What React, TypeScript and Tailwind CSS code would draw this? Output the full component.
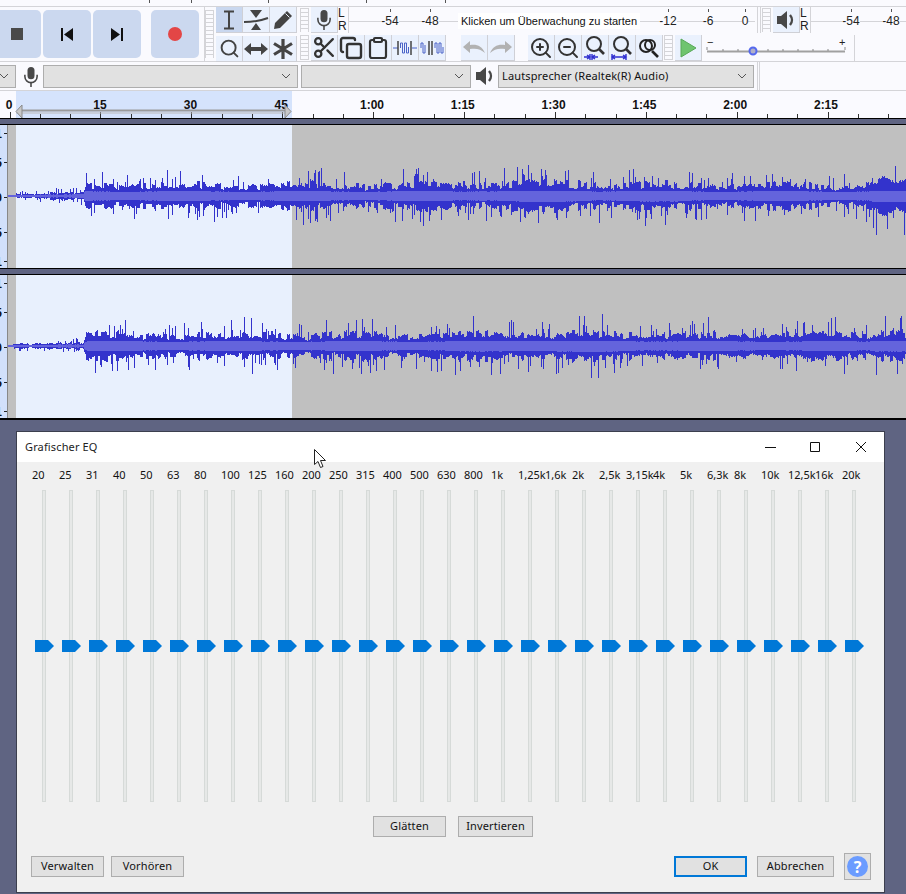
import type { ReactNode } from 'react';
import { Copy, Clipboard, Scissors, Search, ZoomIn, ZoomOut } from 'lucide-react';

const BANDS = ['20', '25', '31', '40', '50', '63', '80', '100', '125', '160', '200', '250', '315', '400', '500', '630', '800', '1k', '1,25k', '1,6k', '2k', '2,5k', '3,15k', '4k', '5k', '6,3k', '8k', '10k', '12,5k', '16k', '20k'];
const RULER = ['15', '30', '45', '1:00', '1:15', '1:30', '1:45', '2:00', '2:15'];

// amplitude envelope of the clip, [x, half height]
const ENVELOPE = [[0, 1], [6, 2], [10, 3], [24, 3], [50, 4], [75, 5], [77, 15], [280, 15], [440, 15], [520, 18], [600, 17], [700, 15], [860, 15], [868, 21], [898, 20]];

function envelopeAt(x: number) {
  for (let i = 1; i < ENVELOPE.length; i++) {
    const [x0, a0] = ENVELOPE[i - 1];
    const [x1, a1] = ENVELOPE[i];
    if (x <= x1) return a0 + ((a1 - a0) * (x - x0)) / (x1 - x0);
  }
  return 14;
}

function buildWave(seed: number, mid: number) {
  let s = seed;
  const rnd = () => {
    s = (s * 16807) % 2147483647;
    return s / 2147483647;
  };
  let outer = '';
  let inner = '';
  let level = 0.8;
  for (let x = 0; x < 898; x++) {
    // level jumps every few pixels, so the body of the wave has blocks and dips
    if (x % 3 === 0) level = 0.42 + rnd() * 0.5;
    const env = envelopeAt(x) * (0.92 + 0.12 * Math.sin(x / 19 + seed));
    const up = Math.max(1, env * (rnd() < 0.14 ? 1 + rnd() * 0.9 : level + rnd() * 0.14));
    const down = Math.max(1, env * (rnd() < 0.14 ? 1 + rnd() * 0.95 : level + rnd() * 0.14));
    const rms = Math.max(1, Math.min(5.5, env * 0.32 + (rnd() < 0.5 ? 0.5 : 0)));
    outer += `M${x + 0.5} ${(mid - up).toFixed(0)}V${(mid + down).toFixed(0)}`;
    inner += `M${x + 0.5} ${(mid - rms).toFixed(0)}V${(mid + rms).toFixed(0)}`;
  }
  return { outer, inner };
}

function Grip({ className = 'h-full' }: { className?: string }) {
  return <div className={`w-[9px] shrink-0 border-x border-[#d4d4d8] bg-[repeating-linear-gradient(180deg,#d4d4d8_0_1px,transparent_1px_4px)] ${className}`} />;
}

function ToolBtn({ children, active }: { children: ReactNode; active?: boolean }) {
  return (
    <div className={`flex h-[26px] w-[27px] shrink-0 items-center justify-center border-r border-b border-[#cfd0d6] ${active ? 'bg-[#c9d7ef]' : 'bg-[#eaf1fd]'}`}>
      {children}
    </div>
  );
}

function TransportBtn({ children, className = 'w-12' }: { children: ReactNode; className?: string }) {
  return <div className={`flex h-12 shrink-0 items-center justify-center rounded-[5px] bg-[#cbd8ef] ${className}`}>{children}</div>;
}

function MeterMark({ label, className = 'w-10' }: { label: string; className?: string }) {
  return (
    <div className={`flex h-full shrink-0 flex-col items-center ${className}`}>
      <div className="mt-[2px] h-[3px] w-px bg-[#555]" />
      <span className="mt-[2px] bg-[#fafafe] text-[12px] leading-[14px] text-[#222]">{label}</span>
    </div>
  );
}

function ChannelLabels() {
  return (
    <div className="flex h-full w-[11px] shrink-0 flex-col border-r border-[#d4d4d8] text-[12px] leading-[13px] text-[#222]">
      <span>L</span>
      <span>R</span>
    </div>
  );
}

function Speaker({ size = 22 }: { size?: number }) {
  return (
    <svg width={size} height={size} viewBox="0 0 22 22">
      <path d="M2 7h4l6-5v18l-6-5H2z" fill="#484848" />
      <path d="M15 6c2.600 3 2.600 7 0 10" fill="none" stroke="#484848" strokeWidth="2.400" />
    </svg>
  );
}

function Mic() {
  return (
    <svg width="16" height="21" viewBox="0 0 18 24">
      <rect x="5" y="1" width="8" height="14" rx="4" fill="#484848" />
      <path d="M2 10v2a7 7 0 0 0 14 0v-2" fill="none" stroke="#484848" strokeWidth="1.800" />
      <path d="M9 19v5" stroke="#484848" strokeWidth="1.800" />
    </svg>
  );
}

function Chevron() {
  return (
    <svg width="10" height="6" viewBox="0 0 10 6" className="shrink-0">
      <path d="M1 1l4 4 4-4" fill="none" stroke="#555" strokeWidth="1" />
    </svg>
  );
}

function Dropdown({ className, label }: { className: string; label?: string }) {
  return (
    <div className={`flex h-[23px] shrink-0 items-center justify-between border border-[#adadad] bg-[#e1e1e1] pr-[6px] pl-[3px] text-[11px] tracking-[0.14px] text-[#111] ${className}`}>
      <span>{label}</span>
      <Chevron />
    </div>
  );
}

function FitIcon({ wide }: { wide?: boolean }) {
  return (
    <svg width="26" height="26" viewBox="0 0 26 26">
      <circle cx="12" cy="9" r="7" fill="none" stroke="#333" strokeWidth="2" />
      <path d="M17 14l5 5" stroke="#333" strokeWidth="2.600" />
      {wide ? (
        <path d="M3 22h14M3 19v6M17 19v6M6 20l-3 2 3 2M14 20l3 2-3 2" fill="none" stroke="#2f2fd0" strokeWidth="1.400" />
      ) : (
        <path d="M2 22h6M10 22h6M8 19l0 6M10 19l0 6M5 20l3 2-3 2M13 20l-3 2 3 2" fill="none" stroke="#2f2fd0" strokeWidth="1.400" />
      )}
    </svg>
  );
}

function TransportRow() {
  return (
    <div className="flex h-[54px] items-center bg-[#fafafe]">
      <div className="flex -ml-[7px] gap-[2px]">
        <TransportBtn>
          <div className="ml-[-1px] h-3 w-3 bg-[#4a4a4a]" />
        </TransportBtn>
        <TransportBtn>
          <svg width="14" height="13" viewBox="0 0 14 13"><path d="M1 0h2v13H1zM13 0v13L4 6.500z" fill="#111" /></svg>
        </TransportBtn>
        <TransportBtn>
          <svg width="14" height="13" viewBox="0 0 14 13"><path d="M11 0h2v13h-2zM1 0v13l9-6.500z" fill="#111" /></svg>
        </TransportBtn>
        <TransportBtn className="ml-2 w-12">
          <div className="h-[14px] w-[14px] rounded-full bg-[#e34646]" />
        </TransportBtn>
      </div>
      <div className="ml-[5px] h-full w-px bg-[#d4d4d8]" />
      <Grip className="h-[48px]" />
      <div className="ml-[2px] flex h-full w-[84px] shrink-0 flex-col">
        <div className="flex h-[26px]">
          <ToolBtn active>
            <svg width="14" height="20" viewBox="0 0 14 20"><path d="M2 1.500h10M2 18.500h10M7 1.500v17" fill="none" stroke="#444" strokeWidth="2" /></svg>
          </ToolBtn>
          <ToolBtn>
            <svg width="26" height="22" viewBox="0 0 26 22"><path d="M7 1h12l-6 8zM8 21h10l-5-7z" fill="#444" /><path d="M1 13c8 0 16-1 24-4" fill="none" stroke="#444" strokeWidth="2" /></svg>
          </ToolBtn>
          <ToolBtn>
            <svg width="22" height="22" viewBox="0 0 22 22"><path d="M2 20l1-6L15 2l5 5L8 19z" fill="#444" /><path d="M13.500 4.500l4 4" stroke="#eaf1fd" strokeWidth="1" /></svg>
          </ToolBtn>
        </div>
        <div className="mt-[3px] flex h-[26px]">
          <ToolBtn>
            <Search size={21} strokeWidth={2.200} color="#444" />
          </ToolBtn>
          <ToolBtn>
            <svg width="24" height="14" viewBox="0 0 24 14"><path d="M0 7l7-6v4h10V1l7 6-7 6V9H7v4z" fill="#444" /></svg>
          </ToolBtn>
          <ToolBtn>
            <svg width="22" height="22" viewBox="0 0 22 22"><path d="M11 1v20M2 5.500l18 11M20 5.500l-18 11" stroke="#444" strokeWidth="3.200" /></svg>
          </ToolBtn>
        </div>
      </div>
      <div className="flex h-full min-w-0 flex-1 flex-col">
        <div className="flex h-[26px] items-stretch">
          <Grip className="mt-[1px] h-[24px]" />
          <div className="ml-[2px]"><ToolBtn><Mic /></ToolBtn></div>
          <ChannelLabels />
          <div className="flex w-[406px] shrink-0 items-start bg-[linear-gradient(#d4d4d8,#d4d4d8)] bg-[length:100%_1px] bg-[position:0_14px] bg-no-repeat pl-[21px]">
            <MeterMark label="-54" />
            <MeterMark label="-48" />
            <div className="mt-[6px] ml-2 flex h-[16px] w-[182px] shrink-0 items-center justify-center bg-white text-[11px] whitespace-nowrap text-[#111]">Klicken um Überwachung zu starten</div>
            <div className="ml-2" />
            <MeterMark label="-12" />
            <MeterMark label="-6" />
            <MeterMark label="0" className="ml-[7px] w-5" />
          </div>
          <div className="ml-[2px] h-full w-[4px] shrink-0 border-x border-[#d4d4d8]" />
          <div className="ml-[1px]"><Grip className="mt-[1px] h-[24px]" /></div>
          <div className="ml-[2px]">
            <ToolBtn><Speaker /></ToolBtn>
          </div>
          <ChannelLabels />
          <div className="flex min-w-0 flex-1 items-start bg-[linear-gradient(#d4d4d8,#d4d4d8)] bg-[length:100%_1px] bg-[position:0_14px] bg-no-repeat pl-[20px]">
            <MeterMark label="-54" />
            <MeterMark label="-48" />
          </div>
        </div>
        <div className="mt-px h-px bg-[#d4d4d8]" />
        <div className="mt-[1px] flex h-[26px]">
          <Grip className="h-[25px]" />
          <div className="ml-[2px] flex">
            <ToolBtn><Scissors size={25} strokeWidth={2.200} color="#333" /></ToolBtn>
            <ToolBtn><Copy size={24} strokeWidth={2.400} color="#333" /></ToolBtn>
            <ToolBtn><Clipboard size={24} strokeWidth={2.200} color="#333" /></ToolBtn>
            <ToolBtn>
              <svg width="24" height="14" viewBox="0 0 24 14"><path d="M0 7h5M19 7h5" stroke="#4a63c8" /><path d="M5 0v14M18 0v14" stroke="#444" strokeWidth="1.500" /><path d="M7.500 7V2h2v10h2V2h2v10h2V6" fill="none" stroke="#4a63c8" /></svg>
            </ToolBtn>
            <ToolBtn>
              <svg width="24" height="14" viewBox="0 0 24 14"><path d="M1 7V2h2v10h2V4" fill="none" stroke="#4a63c8" /><path d="M9 0v14M12 0v14" stroke="#444" strokeWidth="1.500" /><path d="M15 7V2h2v10h2V2h2v10h2V6" fill="none" stroke="#4a63c8" /></svg>
            </ToolBtn>
          </div>
          <div className="ml-[15px] flex">
            <ToolBtn>
              <svg width="24" height="16" viewBox="0 0 24 16"><path d="M1 7l7-6v4c7-1 12 1 15 8-4-4-9-5-15-4v4z" fill="#b2b2b2" /></svg>
            </ToolBtn>
            <ToolBtn>
              <svg width="24" height="16" viewBox="0 0 24 16"><path d="M23 7l-7-6v4C9 4 4 6 1 13c4-4 9-5 15-4v4z" fill="#b2b2b2" /></svg>
            </ToolBtn>
          </div>
          <div className="ml-[13px] flex">
            <ToolBtn><ZoomIn size={24} strokeWidth={2} color="#333" /></ToolBtn>
            <ToolBtn><ZoomOut size={24} strokeWidth={2} color="#333" /></ToolBtn>
            <ToolBtn><FitIcon /></ToolBtn>
            <ToolBtn><FitIcon wide /></ToolBtn>
            <ToolBtn>
              <svg width="24" height="22" viewBox="0 0 24 22"><circle cx="9" cy="9" r="6" fill="none" stroke="#222" strokeWidth="2" /><circle cx="13" cy="8" r="5" fill="none" stroke="#222" strokeWidth="2" /><path d="M15 14l6 6" stroke="#222" strokeWidth="2.600" /></svg>
            </ToolBtn>
          </div>
          <div className="ml-px"><Grip className="h-[25px]" /></div>
          <div className="ml-[2px]">
            <ToolBtn>
              <svg width="18" height="20" viewBox="0 0 18 20"><path d="M2 1l15 9-15 9z" fill="#6fc46f" stroke="#58a858" /></svg>
            </ToolBtn>
          </div>
          <svg width="142" height="26" viewBox="0 0 142 26" className="ml-[4px] shrink-0">
            <text x="1" y="11" fontSize="11" fill="#222">−</text>
            <text x="133" y="11" fontSize="11" fill="#222">+</text>
            <path d="M1 16.500h138" stroke="#a0a0a0" strokeWidth="2" />
            <path d="M1 12v3M17 14v2M32 14v2M47 14v2M62 14v2M77 14v2M92 14v2M107 14v2M122 14v2M139 12v3" stroke="#888" />
            <circle cx="47" cy="16" r="3.500" fill="#b0b0c8" stroke="#5468ee" strokeWidth="2" />
          </svg>
          <div className="ml-[6px] h-full w-[3px] shrink-0 border-l border-[#d4d4d8]" />
        </div>
      </div>
    </div>
  );
}

function DeviceRow() {
  return (
    <div className="flex h-[28px] items-center bg-[#fafafe]">
      <Dropdown className="-ml-[20px] w-[36px]" />
      <div className="ml-[6px] flex w-[18px] shrink-0 justify-center"><Mic /></div>
      <Dropdown className="ml-[3px] w-[255px]" />
      <Dropdown className="ml-[3px] w-[170px]" />
      <div className="ml-[3px] flex w-[22px] shrink-0 justify-center"><Speaker /></div>
      <Dropdown className="ml-[2px] w-[256px]" label="Lautsprecher (Realtek(R) Audio)" />
      <div className="ml-[3px] h-full w-[3px] shrink-0 border-x border-[#d4d4d8]" />
    </div>
  );
}

function Ruler() {
  const minor: number[] = [];
  for (let x = 9.5; x < 906; x += 30.3) minor.push(Math.round(x) + 0.5);
  return (
    <div className="relative h-[27px] overflow-hidden bg-[linear-gradient(90deg,#fafaff_16px,#d5e3fc_16px,#d5e3fc_292px,#fafaff_292px)] font-['Liberation_Sans',sans-serif] text-[12px] leading-[14px] font-bold text-[#111]">
      <div className="flex pt-[7px] pl-[4px]">
        <span className="w-[10px] shrink-0 text-center">0</span>
        {RULER.map((label, i) => (
          <span key={label} className={`shrink-0 text-center ${i === 0 ? 'ml-[41px] w-[90px]' : 'w-[90.8px]'}`}>{label}</span>
        ))}
      </div>
      {/* ticks and the loop region marker lie over the labels */}
      <svg width="906" height="27" viewBox="0 0 906 27" className="absolute top-0 left-0">
        {minor.map((x, i) => (
          <path key={x} d={`M${x} ${i % 3 === 0 ? 21 : 23}V27`} stroke="#333" />
        ))}
        <path d="M21 19.500h265" stroke="#9a9a9a" strokeWidth="2" />
        <path d="M16 22h270" stroke="#bbb" strokeWidth="1" />
        <path d="M22 14v13l-6-6.500zM285 14v13l6-6.500z" fill="#c8c8c8" stroke="#8a8a8a" />
      </svg>
    </div>
  );
}

function Track({ seed, mid }: { seed: number; mid: number }) {
  const wave = buildWave(seed, mid);
  return (
    <div className="flex h-[143px]">
      <svg width="8" height="143" viewBox="0 0 8 143" className="shrink-0 bg-[#d2e0fb]">
        {[[13, '1'], [42, '5'], [77, '0'], [112, '5'], [141, '1']].map(([y, t]) => (
          <g key={y}>
            <text x="2" y={Number(y)} textAnchor="end" fontSize="12" fontWeight="bold" fontFamily="Liberation Sans" fill="#111">{t}</text>
            <path d={`M4 ${Number(y) - 4.5}h3`} stroke="#222" />
          </g>
        ))}
        <path d="M7.500 0v143" stroke="#888" />
      </svg>
      <div className="h-full min-w-0 flex-1 bg-[linear-gradient(90deg,#c0c0c0_8px,#e8f0fd_8px,#e8f0fd_284px,#c0c0c0_284px)]">
        <svg width="898" height="143" viewBox="0 0 898 143" shapeRendering="crispEdges">
          <path d={wave.outer} stroke="#3333cc" fill="none" />
          <path d={wave.inner} stroke="#6464dc" fill="none" />
        </svg>
      </div>
    </div>
  );
}

function EqBand({ label }: { label: string }) {
  return (
    <div className="relative h-[312px] w-[27px]">
      <div className="ml-[10px] h-full w-[4px] border border-[#d6dad8] bg-[#e6e8e7]" />
      <svg width="19" height="12" viewBox="0 0 19 12" className="absolute top-[150px] left-[3px]" aria-label={label}>
        <path d="M0 0h13l6 6-6 6H0z" fill="#0078d7" />
      </svg>
    </div>
  );
}

function DialogBtn({ children, className, focused }: { children: ReactNode; className: string; focused?: boolean }) {
  return (
    <div className={`flex h-[21px] shrink-0 items-center justify-center bg-[#e1e1e1] text-[11px] tracking-[0.14px] text-[#111] ${focused ? 'border-2 border-[#0078d7]' : 'border border-[#adadad]'} ${className}`}>
      {children}
    </div>
  );
}

function EqDialog() {
  return (
    <div className="ml-[16px] flex h-[462px] w-[869px] flex-col border border-[#3c3f4e] bg-[#f0f0f0]">
      <div className="flex h-[30px] shrink-0 items-center bg-white pl-[8px] text-[11px] tracking-[0.14px] text-[#222]">
        <span>Grafischer EQ</span>
        <svg width="120" height="14" viewBox="0 0 120 14" className="mr-[3px] ml-auto">
          <path d="M4 7.500h11M49.500 2.500h9v9h-9zM95 2l10 10M105 2L95 12" fill="none" stroke="#111" strokeWidth="1" />
        </svg>
      </div>
      <div className="ml-[15px] flex h-[28px] shrink-0 items-center pb-[2px] text-[11px] text-[#111]">
        {BANDS.map((b) => (
          <span key={b} className="w-[27px] shrink-0 whitespace-nowrap">{b}</span>
        ))}
      </div>
      <div className="ml-[15px] flex shrink-0">
        {BANDS.map((b) => (
          <EqBand key={b} label={b} />
        ))}
      </div>
      <div className="mt-[14px] ml-[356px] flex gap-[12px]">
        <DialogBtn className="w-[73px]">Glätten</DialogBtn>
        <DialogBtn className="w-[75px]">Invertieren</DialogBtn>
      </div>
      <div className="mt-[16px] flex h-[27px] items-center pr-[13px] pl-[14px]">
        <DialogBtn className="w-[73px]">Verwalten</DialogBtn>
        <DialogBtn className="ml-[7px] w-[73px]">Vorhören</DialogBtn>
        <DialogBtn className="ml-auto w-[73px]" focused>OK</DialogBtn>
        <DialogBtn className="ml-[10px] w-[77px]">Abbrechen</DialogBtn>
        <div className="ml-[10px] flex h-[27px] w-[27px] shrink-0 items-center justify-center border border-[#adadad] bg-[#e1e1e1]">
          <div className="flex h-[21px] w-[21px] items-center justify-center rounded-full bg-[#6b9cff] text-[16px] font-bold text-white">?</div>
        </div>
      </div>
    </div>
  );
}

export default function App() {
  return (
    <div className="relative h-[894px] w-[906px] overflow-hidden bg-[#5f6482] font-['Noto_Sans',sans-serif]">
      <div className="h-[6px] bg-[#fafafe]">
        <svg width="906" height="3" viewBox="0 0 906 3" className="block">
          <path d="M149.500 0v3M191.500 0v3M268.500 0v3M366.500 0v3M445.500 0v3" stroke="#555" />
        </svg>
      </div>
      <div className="h-px bg-[#d4d4d8]" />
      <div className="font-['Liberation_Sans',sans-serif]">
        <TransportRow />
      </div>
      <div className="h-px bg-[#d4d4d8]" />
      <DeviceRow />
      <div className="h-px bg-[#d4d4d8]" />
      <Ruler />
      <div className="h-[7px] border-y border-black" />
      <Track seed={4711} mid={71} />
      <div className="h-[7px] border-y border-black" />
      <Track seed={90210} mid={71} />
      <div className="h-[2px] bg-black" />
      <div className="h-[11px]" />
      <EqDialog />
      {/* mouse pointer over the dialog title */}
      <svg width="14" height="20" viewBox="0 0 14 20" className="absolute top-[449px] left-[314px]">
        <path d="M.5.500v15l3.500-3 2.500 6 2.500-1-2.500-6h5z" fill="#fff" stroke="#222" />
      </svg>
    </div>
  );
}
